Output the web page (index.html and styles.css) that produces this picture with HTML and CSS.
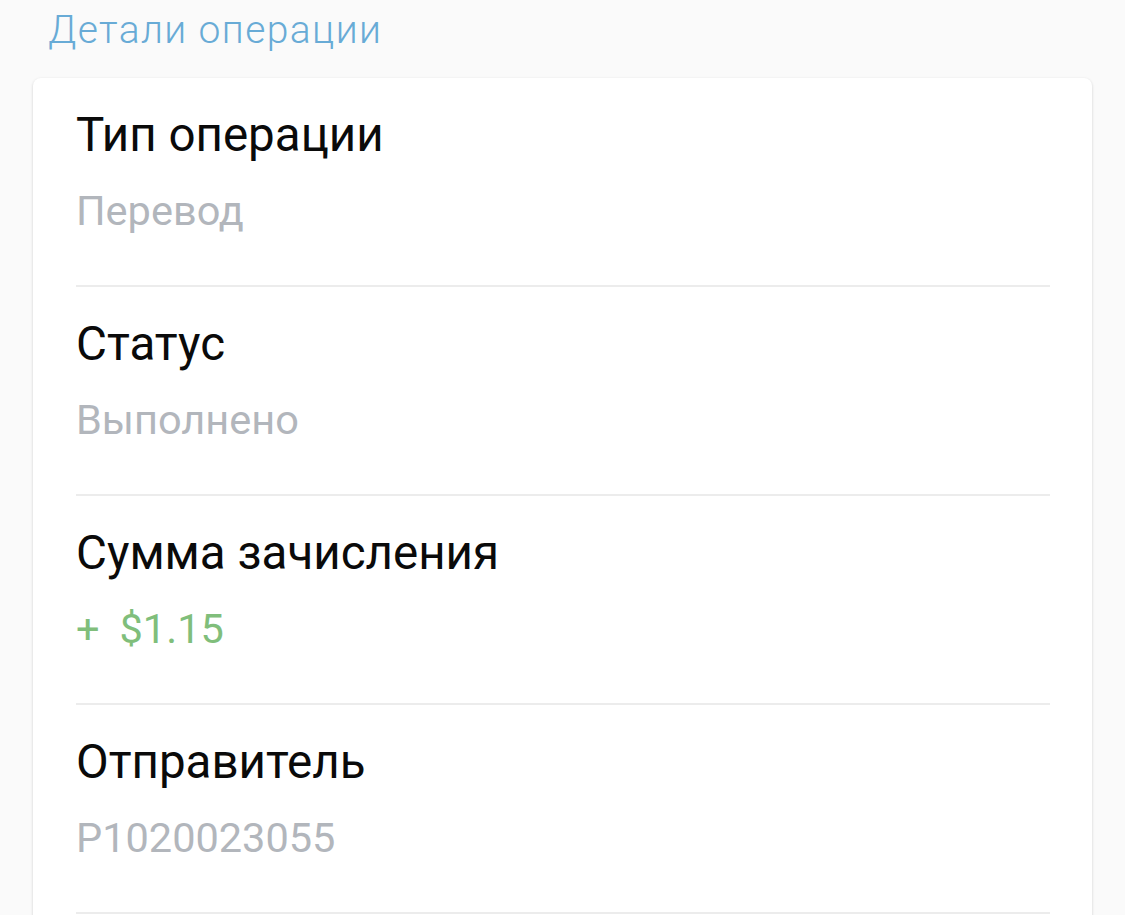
FILE: index.html
```html
<!DOCTYPE html>
<html lang="ru">
<head>
    <meta charset="UTF-8">
    <meta name="viewport" content="width=device-width, initial-scale=1.0">
    <title>Детали операции</title>
    <link rel="stylesheet" href="styles.css">
</head>
<body>
    <h1 class="page-title">Детали операции</h1>

    <!-- Карточка с деталями -->
    <div class="details-card">
        <div class="detail-item">
            <div class="detail-label">Тип операции</div>
            <div class="detail-value">Перевод</div>
        </div>
        <div class="detail-item">
            <div class="detail-label">Статус</div>
            <div class="detail-value">Выполнено</div>
        </div>
        <div class="detail-item">
            <div class="detail-label">Сумма зачисления</div>
            <div class="detail-value income"><span class="sign">+</span>$1.15</div>
        </div>
        <div class="detail-item">
            <div class="detail-label">Отправитель</div>
            <div class="detail-value">P1020023055</div>
        </div>
    </div>
</body>
</html>
```

FILE: styles.css
```css
* {
    margin: 0;
    padding: 0;
    box-sizing: border-box;
}

body {
    font-family: Roboto, "Noto Sans", sans-serif;
    background-color: #fafafa;
    height: 100vh;
    overflow: hidden;
}

.page-title {
    font-size: 39px;
    font-weight: 300;
    line-height: 46px;
    letter-spacing: 1.4px;
    color: #68abd6;
    padding: 7px 0 0 48px;
    margin-bottom: 25px;
}

.details-card {
    margin: 0 33px;
    padding-bottom: 40px;
    background-color: #fff;
    border-radius: 8px;
    box-shadow: 0 1px 3px rgba(0, 0, 0, 0.18);
}

.detail-item {
    margin: 0 42px 0 43px;
    padding: 29px 0 50px;
    border-bottom: 2px solid #ececec;
}

.detail-label {
    font-size: 47.5px;
    line-height: 56px;
    color: #0a0a0a;
}

.detail-value {
    font-size: 41.5px;
    line-height: 48px;
    color: #b2b6bc;
    margin-top: 24px;
}

.detail-value.income {
    color: #80be7b;
}

.sign {
    margin-right: 20px;
}
```
